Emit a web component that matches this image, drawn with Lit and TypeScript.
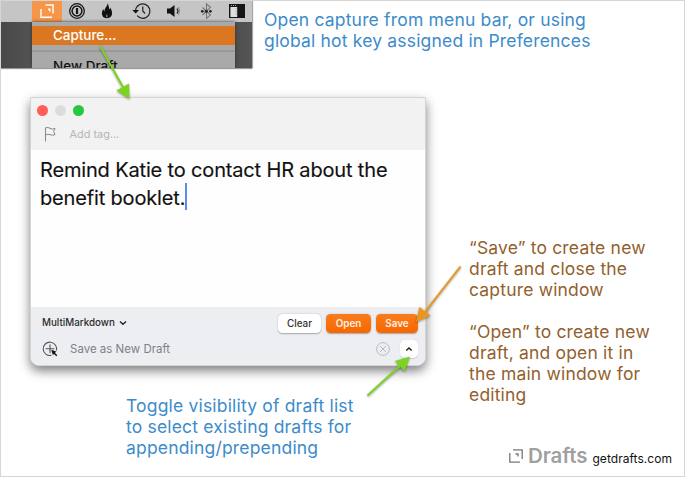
import { LitElement, html, css, svg } from "lit";
import { customElement } from "lit/decorators.js";

@customElement("menu-preview")
class MenuPreview extends LitElement {
  static styles = css`
    :host { display: flex; flex-direction: column; width: 251px; height: 67px; overflow: hidden; background: linear-gradient(90deg, #484848, #535353 12%, #4a4a4a 88%, #555); box-shadow: 0 1px 1px #999, 1px 0 1px #aaa; }
    .bar { height: 21px; flex: none; background: #c5c5c5; }
    .bar svg { display: block; }
    .menu { margin-left: 31px; width: 203px; height: 46px; background: #a9a9a9; font: 500 13.5px/19px Inter, sans-serif; box-shadow: 0 0 3px #333; }
    .item { padding-left: 21px; height: 19px; white-space: nowrap; color: #111; }
    .active { background: #db7721; color: #fff; letter-spacing: -.05px; }
    .pad { height: 4px; }
    .rule { height: 2px; margin: 5px 0 5px; background: #999; }
  `;
  render() {
    return html`
      <div class="bar">
        <svg width="251" height="21" viewBox="1 1 251 21" fill="none">
          <rect x="32" y="1" width="30" height="21" fill="#f79548" />
          <path d="M41 9V17.3H52M45.5 5H53V13.5M48 9.2H49.8V11.5" stroke="#fff" stroke-width="1.5" />
          <circle cx="77" cy="11" r="7.3" stroke="#161616" stroke-width="1.3" />
          <circle cx="77" cy="11" r="4.9" stroke="#161616" stroke-width="1.5" />
          <path d="M77 8V14" stroke="#161616" stroke-width="2.2" />
          <path d="M107.6 3C108.4 5.8 109.3 7 109 9.5C110 9 110 8 110 7.5C112 10 112.8 14 111.2 16.3C109.5 18.7 104.5 18.8 102.8 16.5C101 13.5 102 11 103.5 9C103.6 10.3 104 11 104.6 11.5C104 8 107.8 6.5 107.6 3Z" fill="#111" />
          <path d="M106.6 14C107.4 15 108 15.8 107.4 17.3H106.4C105.6 16.2 106.6 15.2 106.6 14Z" fill="#888" />
          <path d="M135.6 10.4A7.2 7.2 0 1 1 137.2 15.7M142.8 6.5V11L145 13.5" stroke="#222" stroke-width="1.2" />
          <path d="M132.3 10H139L135.7 13.6Z" fill="#111" />
          <path d="M167 8.5H170L174.5 5V17L170 13.5H167Z" fill="#111" />
          <path d="M177 8.5Q178.8 11 177 13.5" stroke="#222" stroke-width="1.2" />
          <path d="M178.5 7Q180.4 11 178.5 15" stroke="#555" stroke-width=".6" />
          <path d="M202.5 7.5L210.5 15L206.5 18.3V4L210.5 7.3L202.5 15" stroke="#777" stroke-width="1.1" />
          <g fill="#222"><circle cx="202.3" cy="11.3" r="1.4" /><circle cx="206.3" cy="11.3" r="1.5" /><circle cx="210.4" cy="11.3" r="1.4" /></g>
          <rect x="229" y="4" width="16" height="14" fill="#151515" />
          <path d="M230.4 7H237.2V17H230.4Z" fill="#dedede" />
          <path d="M231 5.5H236" stroke="#aaa" stroke-dasharray="1 1" />
          <path d="M235.2 9H237M235.2 11.5H237M235.2 14H237" stroke="#999" stroke-width=".6" />
        </svg>
      </div>
      <div class="menu">
        <div class="pad"></div>
        <div class="item active">Capture...</div>
        <div class="rule"></div>
        <div class="item">New Draft</div>
      </div>`;
  }
}

@customElement("capture-window")
class CaptureWindow extends LitElement {
  static styles = css`
    :host { display: flex; flex-direction: column; box-sizing: border-box; width: 396px; height: 269px; border: 1px solid #d4d4d4; border-radius: 1px 1px 9px 9px; overflow: hidden; background: #fefefe; font-family: Inter, sans-serif; box-shadow: 0 5px 11px rgba(0,0,0,.5); }
    header { height: 52px; background: #f2f2f2; flex: none; }
    .lights { display: flex; gap: 7px; padding: 7px 0 0 6px; }
    .light { width: 11px; height: 11px; border-radius: 50%; }
    .red { background: #ff5d55; } .grey { background: #dcdcdc; } .green { background: #27c840; }
    .tags { display: flex; align-items: center; height: 16px; margin: 10px 0 0 12px; gap: 13.5px; font-size: 10.9px; color: #b5b5b5; }
    svg { display: block; flex: none; }
    .text { flex: 1; margin: 0; padding: 7px 9px; font-size: 20px; line-height: 27.5px; letter-spacing: -0.16px; color: #111; -webkit-text-stroke: .15px #111; white-space: nowrap; }
    .caret { display: inline-block; width: 1.6px; height: 27px; background: #5a8bee; vertical-align: -6px; margin: -8px 0 -8px 0; position: relative; top: -9px; }
    footer { height: 58px; box-sizing: border-box; flex: none; background: #edeef2; padding: 7px 7px 0 11px; }
    .row { display: flex; align-items: center; }
    .syntax { flex: 1; display: flex; align-items: center; gap: 4px; margin-top: -1px; font-size: 9.8px; font-weight: 500; color: #2b2b2b; }
    .btn { box-sizing: border-box; height: 18.5px; border-radius: 4.5px; font-size: 9.9px; font-weight: 500; line-height: 18.5px; text-align: center; background: #fff; color: #333; box-shadow: 0 .5px 1.5px rgba(0,0,0,.3); }
    .clear { width: 43px; } .open { width: 45px; margin-left: 5px; } .save { width: 42px; margin-left: 5px; }
    .hot { background: linear-gradient(#fa7c1c, #f66700); color: #fff0e4; font-weight: 600; }
    .dest { margin-top: 7px; }
    .label { flex: 1; margin-left: 12px; font-size: 11.5px; color: #808084; }
    .toggle { width: 18px; height: 18.5px; border-radius: 5px; background: #fff; margin-left: 10px; display: flex; align-items: center; justify-content: center; box-shadow: 0 .5px 1px rgba(0,0,0,.15); }
  `;
  render() {
    return html`
      <header>
        <div class="lights"><i class="light red"></i><i class="light grey"></i><i class="light green"></i></div>
        <div class="tags">
          <svg width="13" height="16" fill="none" stroke="#888" stroke-width="1"><path d="M2.5 15.5V1.8Q5 .8 7 2.3T12 2.5L10.7 5.5L12 8.7Q9 9.7 7 8.7T2.5 9" /></svg>
          <span>Add tag...</span>
        </div>
      </header>
      <p class="text">Remind Katie to contact HR about the<br />benefit booklet.<span class="caret"></span></p>
      <footer>
        <div class="row">
          <div class="syntax"><span>MultiMarkdown</span><svg width="8" height="6" fill="none" stroke="#222" stroke-width="1.4"><path d="M1 1.5L4 4.3L7 1.5" /></svg></div>
          <div class="btn clear">Clear</div><div class="btn hot open">Open</div><div class="btn hot save">Save</div>
        </div>
        <div class="row dest">
          <svg width="16" height="16" fill="none" stroke="#555" stroke-width="1.1"><path d="M9.3 14.4A6.7 6.7 0 1 1 14.4 9.5M8 3.5V12.3M3.6 7.8H12.4" /><path d="M9.2 8.8L14.6 10.8L12.8 11.7L15.3 14.2L14.3 15.2L11.8 12.7L11 14.4Z" fill="#111" stroke="none" /></svg>
          <span class="label">Save as New Draft</span>
          <svg width="14" height="14" fill="none" stroke="#b9babd" stroke-width="1"><circle cx="7" cy="7" r="6.4" /><path d="M4 4L10 10M10 4L4 10" /></svg>
          <div class="toggle"><svg width="8" height="6" fill="none" stroke="#222" stroke-width="1.5"><path d="M1.3 4.5L4 2L6.7 4.5" /></svg></div>
        </div>
      </footer>`;
  }
}

const arrow = (line: string, head: string, color: string) => svg`
  <path d=${line} stroke=${color} stroke-width="2" />
  <path d=${head} fill=${color} />`;

@customElement("app-root")
class AppRoot extends LitElement {
  static styles = css`
    :host { display: block; position: relative; box-sizing: border-box; width: 685px; height: 477px; overflow: hidden; background: #fff; border: 1px solid #d6d6d6; font-family: Inter, sans-serif; }
    capture-window { position: absolute; left: 29px; top: 96px; }
    .note { position: absolute; font-size: 17.5px; line-height: 21px; font-weight: 400; letter-spacing: .18px; white-space: nowrap; margin: 0; }
    .blue { color: #3d8bca; } .brown { color: #935f2e; }
    .n1 { left: 263px; top: 8px; }
    .n2 { left: 468px; top: 236px; }
    .n3 { left: 468px; top: 320px; }
    .n4 { left: 125px; top: 394px; }
    .arrows { position: absolute; left: -1px; top: -1px; filter: drop-shadow(0 1px 1px rgba(0,0,0,.4)); }
    .brand { position: absolute; left: 508px; top: 441px; display: flex; align-items: baseline; }
    .name { font-size: 20.5px; line-height: 27px; font-weight: 600; color: #a0a0a0; margin-left: 5px; letter-spacing: -.1px; }
    .site { font-size: 12px; color: #111; margin-left: 5px; letter-spacing: .05px; }
  `;
  render() {
    return html`
      <menu-preview></menu-preview>
      <capture-window></capture-window>
      <p class="note blue n1">Open capture from menu bar, or using<br />global hot key assigned in Preferences</p>
      <p class="note brown n2">“Save” to create new<br />draft and close the<br />capture window</p>
      <p class="note brown n3">“Open” to create new<br />draft, and open it in<br />the main window for<br />editing</p>
      <p class="note blue n4">Toggle visibility of draft list<br />to select existing drafts for<br />appending/prepending</p>
      <svg class="arrows" width="685" height="477" fill="none">
        ${arrow("M100 46L124 89", "M129.5 99L116.5 90.5L129 83.5Z", "#7dd321")}
        ${arrow("M367.5 395.5L401 365", "M410 356.5L404.5 371.5L395 361Z", "#7dd321")}
        ${arrow("M460.5 266.5L425 312", "M416 322L419.5 307L430.5 315.8Z", "#e8961d")}
      </svg>
      <div class="brand">
        <svg width="14" height="14" fill="none" stroke="#777" stroke-width="1.3"><path d="M.8 4V13.2H11M4 .8H13.2V10M6.5 5H9V7.5" /></svg>
        <span class="name">Drafts</span><span class="site">getdrafts.com</span>
      </div>`;
  }
}
